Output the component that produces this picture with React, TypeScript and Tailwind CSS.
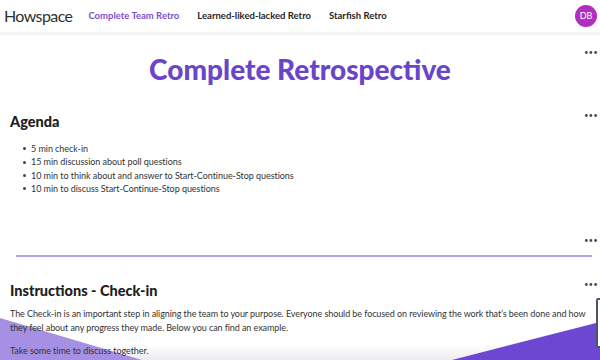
const navItems = [
  { label: "Complete Team Retro", active: true },
  { label: "Learned-liked-lacked Retro", active: false },
  { label: "Starfish Retro", active: false },
];

const agenda = [
  "5 min check-in",
  "15 min discussion about poll questions",
  "10 min to think about and answer to Start-Continue-Stop questions",
  "10 min to discuss Start-Continue-Stop questions",
];

// "..." menu shown on the top right corner of every content block
function BlockMenu({ top }: { top: number }) {
  return (
    <div
      className="absolute right-[2px] text-[7px] leading-none tracking-[0.5px] text-gray-700"
      style={{ top }}
    >
      •••
    </div>
  );
}

export default function App() {
  return (
    <div
      className="relative h-[360px] w-[600px] overflow-hidden bg-white text-[#2b2b2b]"
      style={{ fontFamily: "Lato, 'Noto Sans', sans-serif" }}
    >
      {/* decorative shapes at the bottom */}
      <div className="absolute inset-x-0 bottom-0 h-[16px] bg-gradient-to-b from-transparent to-[#ececf0]" />
      <svg className="absolute bottom-0 left-0" width="600" height="60" viewBox="0 0 600 60" aria-hidden>
        <polygon points="0,18 142,60 0,60" fill="#a690e3" />
        <polygon points="600,22 600,60 452,60" fill="#6c48d2" />
      </svg>
      <div className="absolute bottom-[12px] right-[-6px] h-[50px] w-[10px] rounded-[2px] border-2 border-gray-600 bg-white" />

      <header className="relative z-10 flex h-[35px] items-center border-b-[3px] border-gray-100 bg-white pl-[4px] pr-[3px]">
        <div className="text-[16px] tracking-[-0.6px] text-[#2f2f2f]">Howspace</div>
        <nav className="ml-[16px] flex gap-[18px] text-[9.5px] font-bold">
          {navItems.map((item) => (
            <span key={item.label} className={item.active ? "text-[#7b50d0]" : "text-[#262626]"}>
              {item.label}
            </span>
          ))}
        </nav>
        <div className="ml-auto flex h-[22px] w-[22px] items-center justify-center rounded-full bg-[#b12ec1] text-[9px] text-white">
          DB
        </div>
      </header>

      <main className="relative z-10 flex flex-col">
        <section className="relative pt-[18px] text-center">
          <BlockMenu top={14} />
          <h1 className="text-[28px] font-black leading-[32px] text-[#6a45c9]">Complete Retrospective</h1>
        </section>

        <section className="relative px-[10px] pt-[28px]">
          <BlockMenu top={27} />
          <h2 className="text-[14.5px] font-black leading-[18px] text-[#202020]">Agenda</h2>
          <ul className="mt-[11px] flex flex-col pl-[13px] text-[9px] leading-[13.4px] tracking-[-0.05px] text-[#333]">
            {agenda.map((a) => (
              <li key={a} className="flex items-center gap-[5px]">
                <span className="h-[3px] w-[3px] rounded-full bg-[#444]" />
                <span>{a}</span>
              </li>
            ))}
          </ul>
        </section>

        <section className="relative pl-[16px] pr-[8px] pt-[59px]">
          <BlockMenu top={41} />
          <div className="h-[2px] bg-[#b6a4ea]" />
        </section>

        <section className="relative px-[10px] pt-[25px]">
          <BlockMenu top={24} />
          <h2 className="text-[14.5px] font-black leading-[18px] text-[#202020]">Instructions - Check-in</h2>
          <p className="mt-[7px] text-[9px] leading-[14px] tracking-[-0.08px] text-[#333]">
            The Check-in is an important step in aligning the team to your purpose. Everyone should be focused on reviewing the work that’s been done and how they feel about any progress they made. Below you can find an example.
          </p>
          <p className="mt-[9px] text-[9px] leading-[14px] tracking-[-0.05px] text-[#333]">
            Take some time to discuss together.
          </p>
        </section>
      </main>
    </div>
  );
}
